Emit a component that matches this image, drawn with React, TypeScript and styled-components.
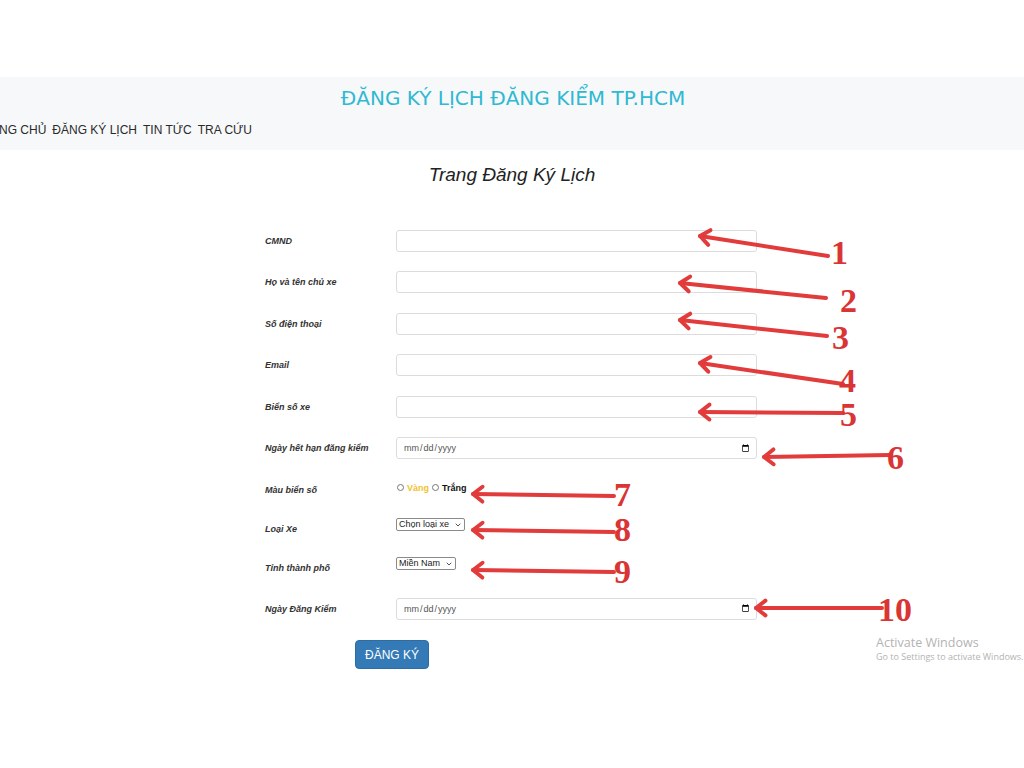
import React from "react";
import styled, { createGlobalStyle } from "styled-components";
import { ChevronDown } from "lucide-react";

const Global = createGlobalStyle`
  html, body { margin: 0; padding: 0; background: #ffffff; }
  body { font-family: "Liberation Sans", Arial, sans-serif; }
  * { box-sizing: border-box; }
`;

const Page = styled.div`
  position: relative;
  width: 1024px;
  height: 768px;
  overflow: hidden;
  background: #fff;
`;

const Header = styled.header`
  margin-top: 77px;
  height: 73px;
  background: #f7f8fa;
  display: flex;
  flex-direction: column;
`;

const Title = styled.h1`
  margin: 9px 0 0;
  text-align: center;
  font-family: "DejaVu Sans", Verdana, sans-serif;
  font-weight: normal;
  font-size: 20px;
  line-height: 24px;
  color: #2fb9d2;
  padding-left: 2px;
`;

const Nav = styled.nav`
  margin: 12px 0 0 -25px;
  display: flex;
  gap: 6px;
  font-family: "Liberation Sans", Arial, sans-serif;
  font-size: 12px;
  line-height: 16px;
  color: #2a2a2a;
`;

const NavLink = styled.a`
  color: inherit;
  text-decoration: none;
  white-space: nowrap;
`;

const Heading = styled.h2`
  margin: 13px 0 0;
  text-align: center;
  font-family: "Liberation Sans", Arial, sans-serif;
  font-style: italic;
  font-weight: normal;
  font-size: 19px;
  line-height: 23px;
  color: #222;
`;

const Form = styled.form`
  width: 494px;
  margin: 34px auto 0;
  display: flex;
  flex-direction: column;
`;

const Row = styled.div<{ $h: number }>`
  display: grid;
  grid-template-columns: 131px 361px;
  align-items: center;
  height: ${(p) => p.$h}px;
`;

const Label = styled.label`
  font-family: "Liberation Sans", Arial, sans-serif;
  font-size: 9px;
  font-weight: bold;
  font-style: italic;
  color: #333;
`;

const TextInput = styled.input`
  width: 361px;
  height: 22px;
  border: 1px solid #dcdcdc;
  border-radius: 3px;
  background: #fff;
  padding: 0 6px;
  font-family: "Liberation Sans", Arial, sans-serif;
  font-size: 9px;
  color: #555;
  outline: none;
  &::-webkit-datetime-edit { color: #555; }
  &::-webkit-calendar-picker-indicator { width: 9px; height: 9px; margin: 0; padding: 0; }
`;

const Radios = styled.div`
  display: flex;
  align-items: center;
  gap: 2px;
  margin-bottom: 4px;
  font-family: "Liberation Sans", Arial, sans-serif;
  font-size: 9px;
  font-weight: bold;
`;

const Radio = styled.input`
  width: 7px;
  height: 7px;
  margin: 0 1px 0 1px;
`;

const RadioText = styled.span<{ $c: string }>`
  color: ${(p) => p.$c};
`;

const SelectWrap = styled.div`
  position: relative;
  justify-self: start;
  margin-bottom: 9px;
  display: flex;
  align-items: center;
  color: #333;
  & > svg {
    position: absolute;
    right: 3px;
    top: 3px;
    pointer-events: none;
  }
`;

const Select = styled.select`
  appearance: none;
  -webkit-appearance: none;
  height: 13px;
  padding: 0 14px 0 2px;
  font-family: "Liberation Sans", Arial, sans-serif;
  font-size: 9px;
  line-height: 11px;
  color: #222;
  border: 1px solid #8a8a8a;
  border-radius: 2px;
  background: #fff;
  outline: none;
`;

const Submit = styled.button`
  margin: 11px 0 0 90px;
  align-self: flex-start;
  width: 74px;
  height: 29px;
  border: 1px solid #2e6da4;
  border-radius: 4px;
  background: #337ab7;
  color: #fff;
  font-family: "Liberation Sans", Arial, sans-serif;
  font-size: 12px;
  cursor: pointer;
`;

const Overlay = styled.svg`
  position: absolute;
  left: 0;
  top: 0;
  width: 1024px;
  height: 768px;
  pointer-events: none;
`;

const Watermark = styled.div`
  position: absolute;
  left: 876px;
  top: 635px;
  color: #b3b3b3;
  font-family: "Open Sans", "Noto Sans", sans-serif;
  white-space: nowrap;
`;

const WmTitle = styled.div`
  font-size: 12.5px;
  line-height: 16px;
`;

const WmSub = styled.div`
  font-size: 9px;
  line-height: 12px;
`;

type Arrow = { tip: [number, number]; tail: [number, number]; n: string; nx: number; ny: number };

const arrows: Arrow[] = [
  { tip: [700, 236], tail: [828, 256], n: "1", nx: 831, ny: 264 },
  { tip: [680, 283], tail: [826, 298], n: "2", nx: 840, ny: 312 },
  { tip: [680, 320], tail: [827, 336], n: "3", nx: 832, ny: 349 },
  { tip: [700, 363], tail: [843, 384], n: "4", nx: 839, ny: 392 },
  { tip: [700, 412], tail: [843, 413], n: "5", nx: 840, ny: 426 },
  { tip: [764, 457], tail: [890, 455], n: "6", nx: 887, ny: 469 },
  { tip: [473, 494], tail: [614, 496], n: "7", nx: 614, ny: 506 },
  { tip: [473, 530], tail: [614, 532], n: "8", nx: 614, ny: 541 },
  { tip: [473, 570], tail: [614, 572], n: "9", nx: 614, ny: 583 },
  { tip: [756, 608], tail: [882, 608], n: "10", nx: 878, ny: 621 },
];

function head(tip: [number, number], tail: [number, number]) {
  const dx = tail[0] - tip[0];
  const dy = tail[1] - tip[1];
  const len = Math.hypot(dx, dy);
  const ux = dx / len;
  const uy = dy / len;
  const a = (38 * Math.PI) / 180;
  const L = 12;
  const r = (s: number) => [
    tip[0] + L * (ux * Math.cos(s * a) - uy * Math.sin(s * a)),
    tip[1] + L * (ux * Math.sin(s * a) + uy * Math.cos(s * a)),
  ];
  const p1 = r(1);
  const p2 = r(-1);
  return `M${p1[0]},${p1[1]} L${tip[0]},${tip[1]} L${p2[0]},${p2[1]}`;
}

export default function App() {
  return (
    <Page>
      <Global />
      <Header>
        <Title>ĐĂNG KÝ LỊCH ĐĂNG KIỂM TP.HCM</Title>
        <Nav>
          <NavLink href="#">TRANG CHỦ</NavLink>
          <NavLink href="#">ĐĂNG KÝ LỊCH</NavLink>
          <NavLink href="#">TIN TỨC</NavLink>
          <NavLink href="#">TRA CỨU</NavLink>
        </Nav>
      </Header>
      <Heading>Trang Đăng Ký Lịch</Heading>
      <Form onSubmit={(e) => e.preventDefault()}>
        <Row $h={41.5}>
          <Label>CMND</Label>
          <TextInput type="text" />
        </Row>
        <Row $h={41.5}>
          <Label>Họ và tên chủ xe</Label>
          <TextInput type="text" />
        </Row>
        <Row $h={41.5}>
          <Label>Số điện thoại</Label>
          <TextInput type="text" />
        </Row>
        <Row $h={41.5}>
          <Label>Email</Label>
          <TextInput type="text" />
        </Row>
        <Row $h={41.5}>
          <Label>Biển số xe</Label>
          <TextInput type="text" />
        </Row>
        <Row $h={41.5}>
          <Label>Ngày hết hạn đăng kiểm</Label>
          <TextInput type="date" />
        </Row>
        <Row $h={41.5}>
          <Label>Màu biển số</Label>
          <Radios>
            <Radio type="radio" name="mau" />
            <RadioText $c="#f1c232">Vàng</RadioText>
            <Radio type="radio" name="mau" />
            <RadioText $c="#111">Trắng</RadioText>
          </Radios>
        </Row>
        <Row $h={36.5}>
          <Label>Loại Xe</Label>
          <SelectWrap>
            <Select defaultValue="">
              <option value="">Chọn loại xe</option>
            </Select>
            <ChevronDown size={8} strokeWidth={2.5} />
          </SelectWrap>
        </Row>
        <Row $h={41.5}>
          <Label>Tỉnh thành phố</Label>
          <SelectWrap>
            <Select defaultValue="nam">
              <option value="nam">Miền Nam</option>
            </Select>
            <ChevronDown size={8} strokeWidth={2.5} />
          </SelectWrap>
        </Row>
        <Row $h={40.5}>
          <Label>Ngày Đăng Kiểm</Label>
          <TextInput type="date" />
        </Row>
        <Submit type="submit">ĐĂNG KÝ</Submit>
      </Form>
      <Overlay viewBox="0 0 1024 768">
        {arrows.map((a) => (
          <g key={a.n}>
            <path
              d={`M${a.tail[0]},${a.tail[1]} L${a.tip[0]},${a.tip[1]}`}
              stroke="#e23b3b"
              strokeWidth={4}
              strokeLinecap="round"
              fill="none"
            />
            <path
              d={head(a.tip, a.tail)}
              stroke="#e23b3b"
              strokeWidth={4}
              strokeLinecap="round"
              strokeLinejoin="round"
              fill="none"
            />
            <text
              x={a.nx}
              y={a.ny}
              fill="#d93535"
              fontFamily="'Liberation Serif', 'DejaVu Serif', serif"
              fontWeight={900}
              fontSize={34}
            >
              {a.n}
            </text>
          </g>
        ))}
      </Overlay>
      <Watermark>
        <WmTitle>Activate Windows</WmTitle>
        <WmSub>Go to Settings to activate Windows.</WmSub>
      </Watermark>
    </Page>
  );
}
